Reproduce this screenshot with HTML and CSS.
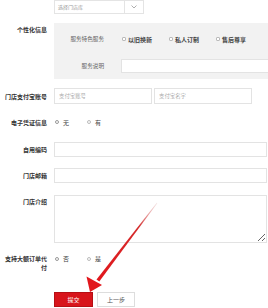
FILE: index.html
```html
<!DOCTYPE html>
<html>
  <head>
    <meta charset="utf-8">
    <meta name="viewport" content="width=device-width, initial-scale=1">
    <title>门店信息</title>
    <link rel="stylesheet" href="styles.css">
  </head>
  <body>
    <div class="form">
      <div class="row row-select">
        <div class="label"></div>
        <div class="select">
          <span class="select-text">选择门店库</span>
          <span class="select-arrow">
            <svg width="6" height="4" viewBox="0 0 6 4"><polyline points="0.5,0.5 3,3 5.5,0.5" fill="none" stroke="#999" stroke-width="0.8"/></svg>
          </span>
        </div>
      </div>

      <div class="row row-panel">
        <div class="label label-top">个性化信息</div>
        <div class="panel">
          <div class="panel-row">
            <div class="sub-label">服务特色服务</div>
            <div class="checks">
              <label class="check"><span class="box"></span>以旧换新</label>
              <label class="check"><span class="box"></span>私人订制</label>
              <label class="check"><span class="box"></span>售后尊享</label>
            </div>
          </div>
          <div class="panel-row">
            <div class="sub-label">服务说明</div>
            <input class="input panel-input" type="text">
          </div>
        </div>
      </div>

      <div class="row row-alipay">
        <div class="label">门店支付宝账号</div>
        <div class="pair">
          <input class="input half" type="text" placeholder="支付宝账号">
          <input class="input half" type="text" placeholder="支付宝名字">
        </div>
      </div>

      <div class="row row-radio">
        <div class="label">电子凭证信息</div>
        <div class="radios">
          <span class="radio"><span class="dot checked"></span>无</span>
          <span class="radio"><span class="dot"></span>有</span>
        </div>
      </div>

      <div class="row row-code">
        <div class="label">自用编码</div>
        <input class="input full" type="text">
      </div>

      <div class="row row-mail">
        <div class="label">门店邮箱</div>
        <input class="input full" type="text">
      </div>

      <div class="row row-intro">
        <div class="label label-top">门店介绍</div>
        <textarea class="textarea"></textarea>
      </div>

      <div class="row row-pay">
        <div class="label">支持大额订单代付</div>
        <div class="radios">
          <span class="radio"><span class="dot checked"></span>否</span>
          <span class="radio"><span class="dot"></span>是</span>
        </div>
      </div>

      <div class="row row-buttons">
        <div class="label"></div>
        <button class="btn btn-submit">提交</button>
        <button class="btn btn-back">上一步</button>
      </div>
    </div>

    <!-- red arrow pointing at the submit button -->
    <svg class="arrow" width="268" height="308" viewBox="0 0 268 308">
      <defs>
        <linearGradient id="shaft" gradientUnits="userSpaceOnUse" x1="157" y1="203" x2="97" y2="282">
          <stop offset="0" stop-color="#e8c8c8" stop-opacity="0.5"/>
          <stop offset="0.3" stop-color="#d42a2a"/>
          <stop offset="1" stop-color="#e2161c"/>
        </linearGradient>
      </defs>
      <polygon points="157.3,203.2 156.8,202.8 96.5,279.4 99.3,281.6" fill="url(#shaft)"/>
      <polygon points="90,292 86.5,276.5 102,285" fill="#e2161c"/>
    </svg>
  </body>
</html>
```

FILE: styles.css
```css
* {
  box-sizing: border-box;
}

body {
  margin: 0;
  background: #fff;
  color: #333;
  font-family: "Noto Sans CJK SC", "Noto Sans", sans-serif;
  overflow: hidden;
}

.form {
  padding-left: 5px;
}

.row {
  display: flex;
  align-items: center;
}

.label {
  flex: none;
  width: 42px;
  margin-right: 7px;
  text-align: right;
  font-size: 6px;
  font-weight: bold;
  line-height: 9px;
  color: #333;
}

.label-top {
  align-self: flex-start;
  padding-top: 2px;
}

.row-select { height: 14px; margin-bottom: 9px; }
.row-panel { align-items: flex-start; margin-bottom: 9px; }
.row-alipay { margin-bottom: 13px; }
.row-radio { height: 10px; margin-bottom: 15px; }
.row-code { margin-bottom: 11px; }
.row-mail { margin-bottom: 12px; }
.row-intro { align-items: flex-start; margin-bottom: 11px; }
.row-pay { align-items: flex-start; margin-bottom: 20px; }

.select {
  display: flex;
  width: 90px;
  height: 14px;
  border: 1px solid #e4e4e4;
}

.select-text {
  flex: 1;
  padding-left: 3px;
  font-size: 5px;
  line-height: 12px;
  color: #999;
}

.select-arrow {
  width: 19px;
  display: flex;
  align-items: center;
  justify-content: center;
  border-left: 1px solid #e4e4e4;
}

.panel {
  flex: 1;
  background: #f2f2f2;
  padding: 9px 0 6px;
}

.panel-row {
  display: flex;
  align-items: center;
  height: 14px;
}

.panel-row + .panel-row {
  margin-top: 13px;
}

.sub-label {
  width: 50px;
  margin-right: 17px;
  text-align: right;
  font-size: 5.6px;
  color: #666;
}

.checks {
  display: flex;
  gap: 17px;
  padding-left: 1px;
}

.check {
  display: flex;
  align-items: center;
  gap: 2px;
  font-size: 6px;
  font-weight: bold;
  color: #444;
}

.box {
  width: 4px;
  height: 4px;
  border: 1px solid #bbb;
  background: #fff;
  border-radius: 1px;
}

.input {
  height: 15px;
  border: 1px solid #e3e3e3;
  background: #fff;
  padding: 0 4px;
  font-family: inherit;
  font-size: 5.4px;
  color: #333;
  outline: none;
}

.input::placeholder {
  color: #aaa;
}

.panel-input {
  flex: 1;
  height: 14px;
  border-right: none;
}

.pair {
  display: flex;
  gap: 2px;
}

.half {
  width: 98px;
  height: 16px;
}

.full {
  width: 213px;
}

.textarea {
  width: 213px;
  height: 48px;
  border: 1px solid #e3e3e3;
  resize: vertical;
  outline: none;
}

.radios {
  display: flex;
  gap: 18px;
  padding-left: 1px;
  height: 9px;
  align-items: center;
}

.radio {
  display: flex;
  align-items: center;
  gap: 4px;
  font-size: 6px;
  color: #444;
}

.dot {
  width: 4px;
  height: 4px;
  border-radius: 50%;
  border: 1px solid #bbb;
  background: #fff;
}

.dot.checked {
  border-color: #999;
  background: radial-gradient(circle, #444 0 40%, #fff 50%);
}

.btn {
  height: 15px;
  padding: 0;
  font-family: inherit;
  font-size: 6px;
  cursor: pointer;
}

.btn-submit {
  width: 39px;
  background: #d8141b;
  border: 1px solid #b50f15;
  color: #fff;
}

.btn-back {
  width: 38px;
  margin-left: 4px;
  background: #fff;
  border: 1px solid #ddd;
  color: #555;
}

.arrow {
  position: absolute;
  top: 0;
  left: 0;
  pointer-events: none;
}
```
